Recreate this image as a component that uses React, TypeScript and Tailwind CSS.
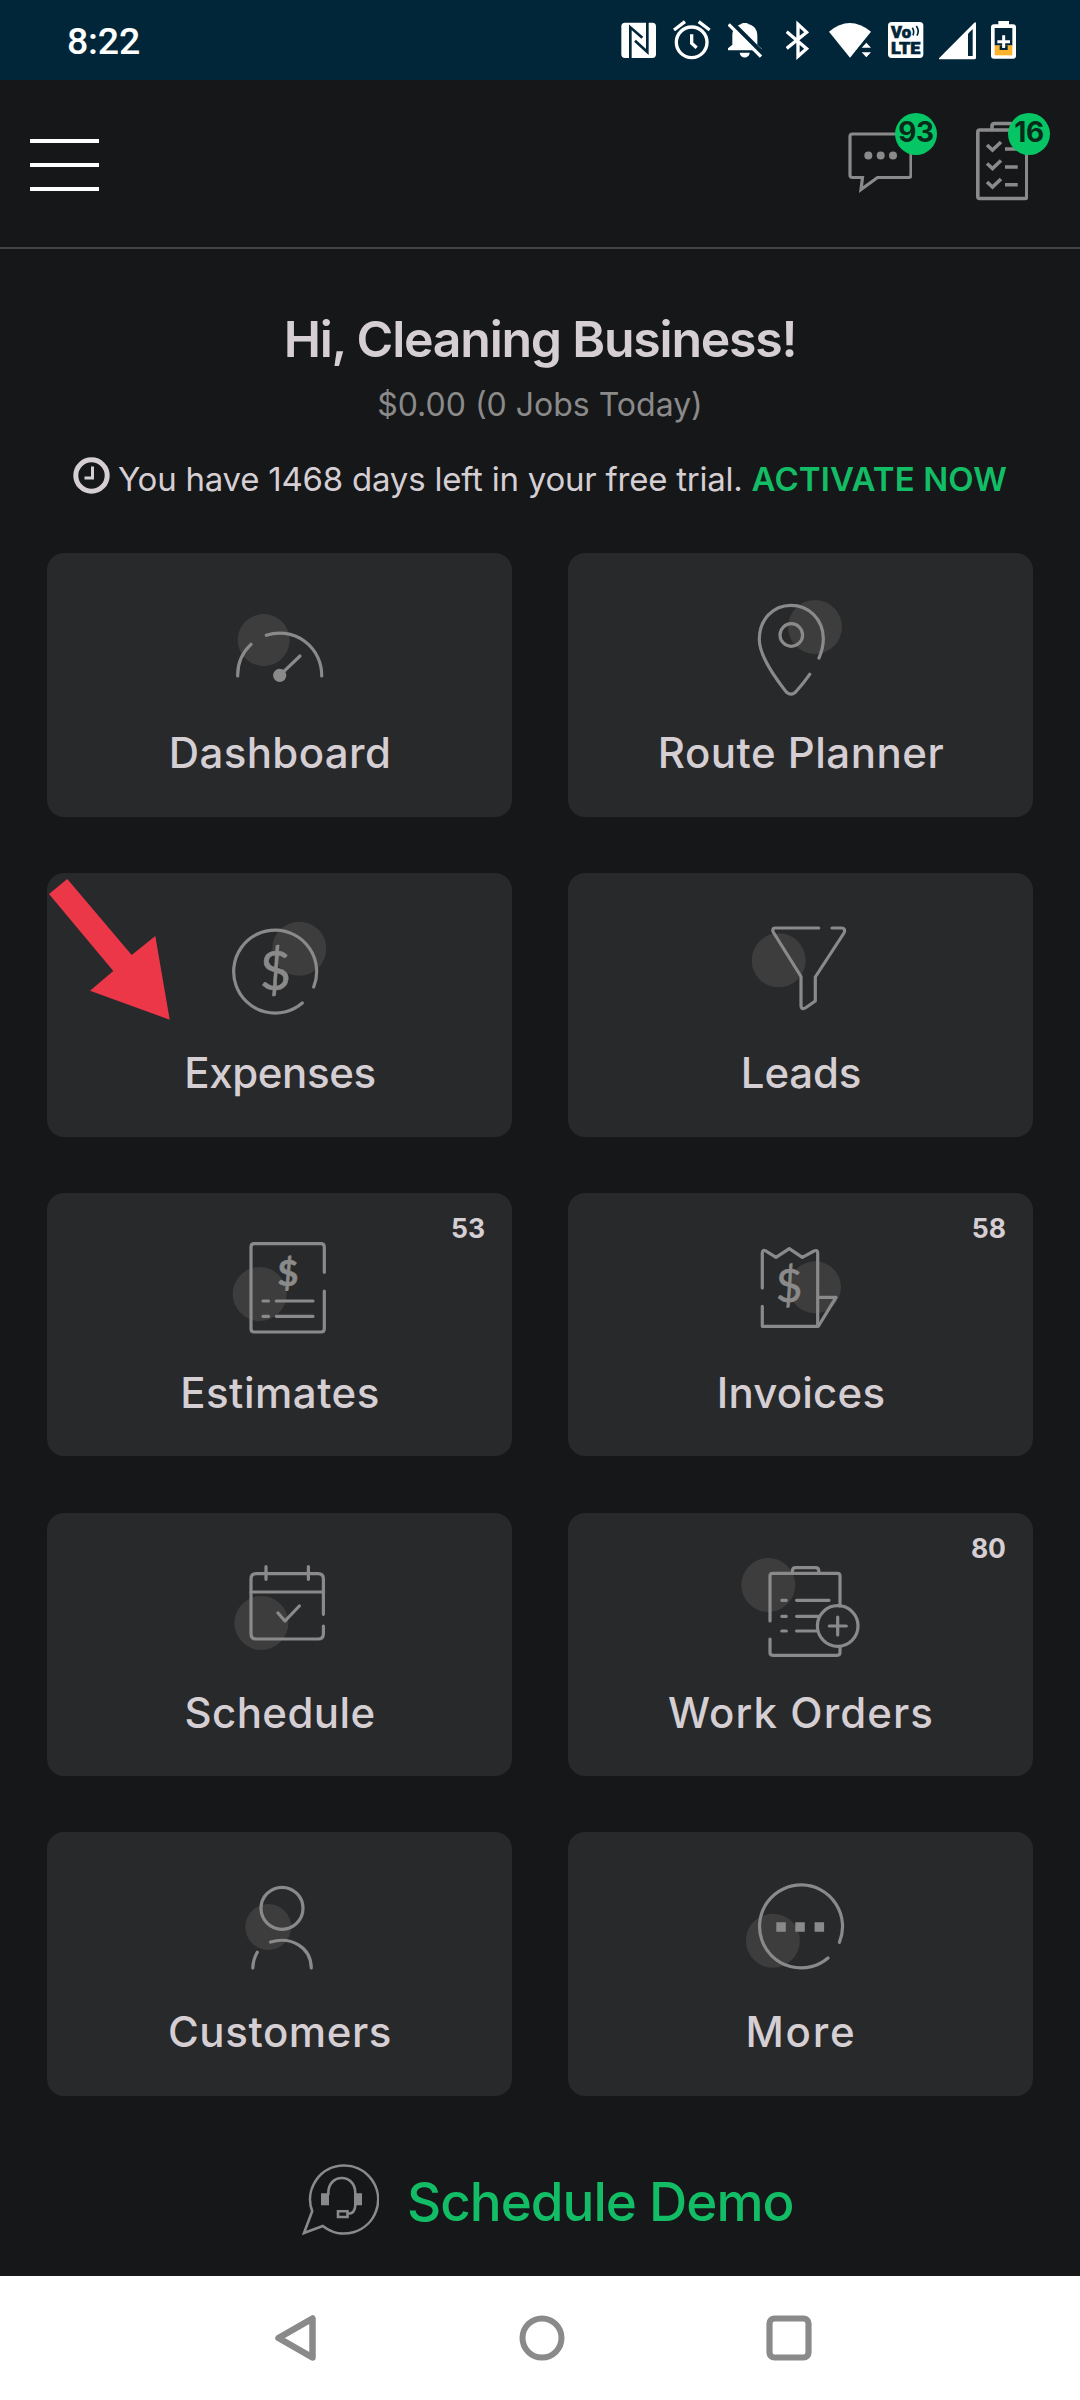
import type { ReactNode } from "react";

type Tile = {
  label: string;
  tracking: string;
  icon: ReactNode;
  count?: number;
  highlighted?: boolean;
};

const Dot = ({ cx, cy, r = 27 }: { cx: number; cy: number; r?: number }) => (
  <circle cx={cx} cy={cy} r={r} fill="#3d3d3d" stroke="none" />
);

const Dollar = ({ x, y, size, weight = 400 }: { x: number; y: number; size: number; weight?: number }) => (
  <text
    x={x}
    y={y}
    fontSize={size}
    fontWeight={weight}
    fontFamily="Lato, sans-serif"
    textAnchor="middle"
    fill="#8a8a8a"
    stroke="#8a8a8a"
    strokeWidth="0.6"
  >
    $
  </text>
);

const tiles: Tile[] = [
  {
    label: "Dashboard",
    tracking: "tracking-[0.4px]",
    icon: (
      <>
        <Dot cx={44.7} cy={47} r={26} />
        <path d="M18.7 83A42 42 0 0 1 32 51.3M47.3 42.3A42 42 0 0 1 102.7 83" />
        <path d="M60.7 82.3 81 63" />
        <circle cx="60.7" cy="82.3" r="6.6" fill="#8a8a8a" stroke="none" />
      </>
    ),
  },
  {
    label: "Route Planner",
    tracking: "tracking-[0.5px]",
    icon: (
      <>
        <Dot cx={75} cy={34} />
        <path d="M79 65C82 58 83.5 52 83.3 45 82.8 26 69 12.3 51 12.3S19.3 26.5 19.3 46.5C19.3 62 33 82 45.5 98 49 102.2 53 102.2 56.5 98 61 93 65 88 69.7 81.3" />
        <circle cx="51.3" cy="42" r="11.3" />
      </>
    ),
  },
  {
    label: "Expenses",
    tracking: "tracking-[-0.4px]",
    highlighted: true,
    icon: (
      <>
        <Dot cx={80.3} cy={35.7} />
        <path d="M83.3 90A41.5 41.5 0 1 1 94.7 74" />
        <Dollar x={56.3} y={77} size={54} />
      </>
    ),
  },
  {
    label: "Leads",
    tracking: "tracking-[-0.2px]",
    icon: (
      <>
        <Dot cx={38.7} cy={47.3} />
        <path d="M78.7 15H35c-2.5 0-2.8 2-1.5 4.5L61 63.5V92c0 4 2 4.5 5 2.5L75.3 88V64L104 20c1.5-3 .5-5-2.5-5H92" />
      </>
    ),
  },
  {
    label: "Estimates",
    tracking: "tracking-[0.5px]",
    count: 53,
    icon: (
      <>
        <Dot cx={40.7} cy={61} />
        <path d="M105.3 39.3V14q0-3.3-3.3-3.3H35.3q-3.3 0-3.3 3.3V95.7q0 3.3 3.3 3.3H102q3.3 0 3.3-3.3V58" />
        <path d="M44 68h5.5M57.3 68H94M44 83.3h5.5M57.3 83.3H94" />
        <Dollar x={69} y={52.5} size={36} weight={700} />
      </>
    ),
  },
  {
    label: "Invoices",
    tracking: "tracking-[0.2px]",
    count: 58,
    icon: (
      <>
        <Dot cx={75} cy={54.3} r={26} />
        <path d="M22.3 55V20q0-3.5 3-2.3L36 24.3 49.3 15.7 62.3 24.3 74 18q3.7-1.5 3.7 2V93.3H22.3V73.3" />
        <path d="M77.7 64.3H96L78.5 93" />
        <Dollar x={49} y={69} size={46} />
      </>
    ),
  },
  {
    label: "Schedule",
    tracking: "tracking-[0.4px]",
    icon: (
      <>
        <Dot cx={42.4} cy={70} />
        <path d="M104.4 61.3V26q0-5.3-5.3-5.3H37.3q-5.3 0-5.3 5.3V80.7Q32 86 37.3 86H99.1q5.3 0 5.3-5.3V73" />
        <path d="M32 39H104.4M47 13.7V26.3M89.4 13.7V26.3M59 60 66 68 80.3 53" />
      </>
    ),
  },
  {
    label: "Work Orders",
    tracking: "tracking-[1.1px]",
    count: 80,
    icon: (
      <>
        <Dot cx={28.3} cy={32} />
        <path d="M30 68V23q0-2.7 2.7-2.7H97.3Q100 20.3 100 23V53M30 86V99.6q0 2.7 2.7 2.7H97.3q2.7 0 2.7-2.7V94" />
        <path d="M52.4 19.5V18q0-3.3 3.3-3.3H75.5q3.3 0 3.3 3.3V19.5" />
        <path d="M41.8 47.3h4.5M56.6 47.3H89M41.8 63.3h4.5M56.6 63.3H79M41.8 78h4.5M56.6 78H77.5" />
        <circle cx="97.7" cy="73" r="20.3" />
        <path d="M89.3 73H106.3M97.7 64V82" />
      </>
    ),
  },
  {
    label: "Customers",
    tracking: "tracking-[0.6px]",
    icon: (
      <>
        <Dot cx={49.3} cy={55} r={23} />
        <circle cx="63" cy="36.3" r="21" />
        <path d="M51.6 70C72 64 92 75 92.3 96M38.3 80.3C35.5 85 34 90 33.8 96" />
      </>
    ),
  },
  {
    label: "More",
    tracking: "tracking-[1.8px]",
    icon: (
      <>
        <Dot cx={32.9} cy={68.7} />
        <path d="M88 86A41.5 41.5 0 1 1 99.4 70.3" />
        <path d="M36.3 50.3h9.5v9.5h-9.5zM55.3 50.3h9.5v9.5h-9.5zM74.6 50.3h9.5v9.5h-9.5z" fill="#8a8a8a" stroke="none" />
      </>
    ),
  },
];

function StatusBar() {
  return (
    <div className="flex h-20 items-center bg-[#012639] pl-[67px] pr-16 text-white">
      <span className="pt-0.5 font-[Roboto,sans-serif] text-[37.5px] font-medium leading-10 tracking-[-0.2px]">8:22</span>

      {/* NFC */}
      <svg className="ml-auto" width="36" height="40" viewBox="0 0 108 120">
        <rect x="1" y="8" width="104" height="106" rx="11" fill="#fff" />
        <path d="M28 116V22L64 53M79 6V96L42 62" fill="none" stroke="#012639" strokeWidth="8" />
      </svg>
      {/* Alarm */}
      <svg className="ml-4" width="38" height="40" viewBox="0 0 114 120" fill="none" stroke="#fff" strokeWidth="10">
        <circle cx="56" cy="67" r="46" />
        <path d="M56 43V70L71 83M3 30 36 5M77 5 110 30" />
      </svg>
      {/* Muted bell */}
      <svg className="ml-[17px]" width="35" height="40" viewBox="0 0 105 120">
        <path d="M0 91V85L13 74V46C13 28 24 17 39 13 40 8 60 8 62 13 78 17 88 29 88 46V74L101 86V91ZM35 98H65C64 117 36 117 35 98Z" fill="#fff" />
        <path d="M6 2 108 104" stroke="#012639" strokeWidth="13" />
        <path d="M2 13 99 110" stroke="#fff" strokeWidth="10" />
      </svg>
      {/* Bluetooth */}
      <svg className="ml-[23px]" width="23" height="40" viewBox="0 0 69 120">
        <path d="M2 35 62 86 36 109V13L62 37 2 85" fill="none" stroke="#fff" strokeWidth="10" />
      </svg>
      {/* Wifi */}
      <svg className="ml-5" width="42" height="40" viewBox="0 0 126 120">
        <path d="M0 35Q62-17 126 35L63 113Z" fill="#fff" />
        <path d="M112 55 88 84V120H126V60Z" fill="#012639" />
        <path d="M98 83 112 68 126 83ZM98 97H126L112 112Z" fill="#fff" />
      </svg>
      {/* VoLTE */}
      <svg className="ml-[17px]" width="36" height="40" viewBox="0 0 108 120" fontFamily="Roboto, sans-serif" fontWeight="900">
        <rect x="0" y="6" width="106" height="108" rx="11" fill="#fff" />
        <text x="9" y="54" fontSize="50" textLength="60" lengthAdjust="spacingAndGlyphs" fill="#012639" stroke="#012639" strokeWidth="2">Vo</text>
        <text x="9" y="102" fontSize="52" textLength="88" lengthAdjust="spacingAndGlyphs" fill="#012639" stroke="#012639" strokeWidth="2">LTE</text>
        <path d="M73 23Q80 33 75 46M85 18Q95 32 87 47" fill="none" stroke="#012639" strokeWidth="5" />
      </svg>
      {/* Signal */}
      <svg className="ml-[15px]" width="37" height="40" viewBox="0 0 111 120">
        <path d="M0 115 106 8Q111 4 111 10V113Q111 118 106 118H2Q-1 118 0 115Z" fill="#fff" />
        <path d="M87 41 101 27V108H87Z" fill="#012639" />
      </svg>
      {/* Battery */}
      <svg className="ml-[15px]" width="25" height="40" viewBox="0 0 75 120">
        <path d="M22 3H54V13H66Q75 13 75 22V107Q75 116 66 116H9Q0 116 0 107V22Q0 13 9 13H22Z" fill="#fff" />
        <path d="M11 24H64V77H11Z" fill="#012639" />
        <path d="M11 76H64V106H11Z" fill="#fbb42c" />
        <path d="M26 76V90H50V76Z" fill="#012639" />
        <path d="M38 46V84M19 65H57" stroke="#fff" strokeWidth="9" />
      </svg>
    </div>
  );
}

function Badge({ children }: { children: ReactNode }) {
  return (
    <span className="flex h-[42px] w-[42px] items-center justify-center rounded-full bg-[#05c564] pb-1 text-[28px] font-bold leading-none tracking-[-0.3px] text-[#09291a]">
      {children}
    </span>
  );
}

function Header() {
  return (
    <header className="flex h-[169px] items-start border-b-2 border-[#434545] pl-[30px] pr-[52px]">
      <div className="mt-[59px] flex flex-col gap-[20px]">
        <div className="h-1 w-[69px] bg-white" />
        <div className="h-1 w-[69px] bg-white" />
        <div className="h-1 w-[69px] bg-white" />
      </div>

      <div className="relative ml-auto mt-[52px]">
        <svg width="64" height="64" viewBox="0 0 64 64" fill="none" stroke="#8a8a8a" strokeWidth="3.2">
          <path d="M14.5 45.5H4.5q-2.5 0-2.5-2.5V4.5q0-2.5 2.500-2.500H60.500q2.500 0 2.500 2.500V43q0 2.500-2.500 2.500H29.500L13 57.500Z" />
          <g fill="#8a8a8a" stroke="none">
            <circle cx="20.3" cy="23.5" r="4" />
            <circle cx="32.700" cy="23.5" r="4" />
            <circle cx="45" cy="23.5" r="4" />
          </g>
        </svg>
        <div className="absolute -right-[25px] -top-[19px]">
          <Badge>93</Badge>
        </div>
      </div>

      <div className="relative ml-[64px] mt-[41px]">
        <svg width="52" height="80" viewBox="0 0 52 80" fill="none" stroke="#8a8a8a" strokeWidth="3.6">
          <rect x="1.8" y="9" width="49" height="68.5" rx="2" />
          <path d="M16 9V5q0-2.5 2.5-2.500H34q2.500 0 2.500 2.500V9" />
          <path d="M11 24 16.5 29 25 21M11 42.500 16.500 47.500 25 39.500M11 61 16.500 66 25 58M29 28H41.700M29 46H41.700M29 63.700H41.700" />
        </svg>
        <div className="absolute -right-[22px] -top-2">
          <Badge>16</Badge>
        </div>
      </div>
    </header>
  );
}

function Greeting() {
  return (
    <section className="flex flex-col items-center whitespace-nowrap pt-[60px] text-[#d5cfd3]">
      <h1 className="text-[50px] font-semibold leading-[60px] tracking-[-1.24px]">Hi, Cleaning Business!</h1>
      <p className="mt-4 text-[32px] leading-10 text-[#8a8a8a]">$0.00 (0 Jobs Today)</p>
      <div className="mt-8 flex items-start text-[33px] leading-[44px]">
        <svg className="mr-2" width="37" height="37" viewBox="0 0 37 37" fill="none" stroke="#d5cfd3">
          <circle cx="18.5" cy="18.5" r="15.7" strokeWidth="5" />
          <path d="M19.5 9.500V21H11.500" strokeWidth="3" />
        </svg>
        <span className="font-[430] tracking-[-0.23px]">You have 1468 days left in your free trial.</span>
        <span className="ml-[9px] font-semibold tracking-[0.1px] text-[#12bd66]">ACTIVATE NOW</span>
      </div>
    </section>
  );
}

function MenuTile({ label, tracking, icon, count, highlighted }: Tile) {
  return (
    <div className="relative flex h-[263.7px] flex-col items-center rounded-[17px] bg-[#28292b] pt-10 text-[#d5cfd3]">
      <svg
        width="121"
        height="110"
        viewBox="0 0 121 110"
        fill="none"
        stroke="#8a8a8a"
        strokeWidth="3.2"
        strokeLinecap="round"
        strokeLinejoin="round"
      >
        {icon}
      </svg>
      <span className={`mt-[25px] whitespace-nowrap pl-px text-[42px] font-[450] leading-[50px] ${tracking}`}>{label}</span>
      {count && (
        <span className="absolute right-[27px] top-[19px] text-[26.500px] font-bold leading-8">{count}</span>
      )}
      {highlighted && (
        <svg className="absolute left-0 top-0" width="130" height="150" viewBox="0 0 130 150">
          <path d="M2 21 20.3 6 84.7 82 108.3 63 122.7 146.7 43 117.7 66.3 98Z" fill="#ec3749" />
        </svg>
      )}
    </div>
  );
}

function ScheduleDemo() {
  return (
    <div className="mt-[63px] flex h-20 items-center gap-7 pl-[299px]">
      <svg width="80" height="80" viewBox="0 0 80 80" fill="none" stroke="#8a8a8a" strokeWidth="2.6">
        <path d="M13.2 52.3A34 34 0 1 1 23.8 67L5 74Z" />
        <path d="M29.3 36V34C29.3 14 56.3 14 56.3 34V46Q56.3 54.7 48.500 54.700" />
        <path d="M22 34.3h8v12h-8zM56 34.3h7v12h-7z" fill="#8a8a8a" stroke="none" />
        <path d="M39 52.3H48.500V58H39z" />
      </svg>
      <span className="pt-[5px] text-[53px] font-[450] leading-[60px] tracking-[-1px] text-[#12bd66]">Schedule Demo</span>
    </div>
  );
}

function NavBar() {
  return (
    <nav className="mt-9 flex h-[124px] items-center justify-between bg-white pl-[274px] pr-[268px]">
      <svg width="44" height="50" viewBox="0 0 44 50" fill="none" stroke="#8a8a8a" strokeWidth="6.5" strokeLinejoin="round">
        <path d="M4.5 25 38.5 5.5V44.5Z" />
      </svg>
      <svg width="46" height="46" viewBox="0 0 46 46" fill="none" stroke="#8a8a8a" strokeWidth="6">
        <circle cx="23" cy="23" r="19.5" />
      </svg>
      <svg width="46" height="46" viewBox="0 0 46 46" fill="none" stroke="#8a8a8a" strokeWidth="6.2">
        <rect x="3.5" y="3.5" width="39" height="39" rx="5" />
      </svg>
    </nav>
  );
}

export default function App() {
  return (
    <main className="h-[2400px] w-[1080px] overflow-hidden bg-[#161719] font-[Inter,sans-serif]">
      <StatusBar />
      <Header />
      <Greeting />
      <div className="mt-[52.2px] grid grid-cols-2 gap-x-14 gap-y-[56.1px] px-[47px]">
        {tiles.map((tile) => (
          <MenuTile key={tile.label} {...tile} />
        ))}
      </div>
      <ScheduleDemo />
      <div className="h-px" />
      <NavBar />
    </main>
  );
}
